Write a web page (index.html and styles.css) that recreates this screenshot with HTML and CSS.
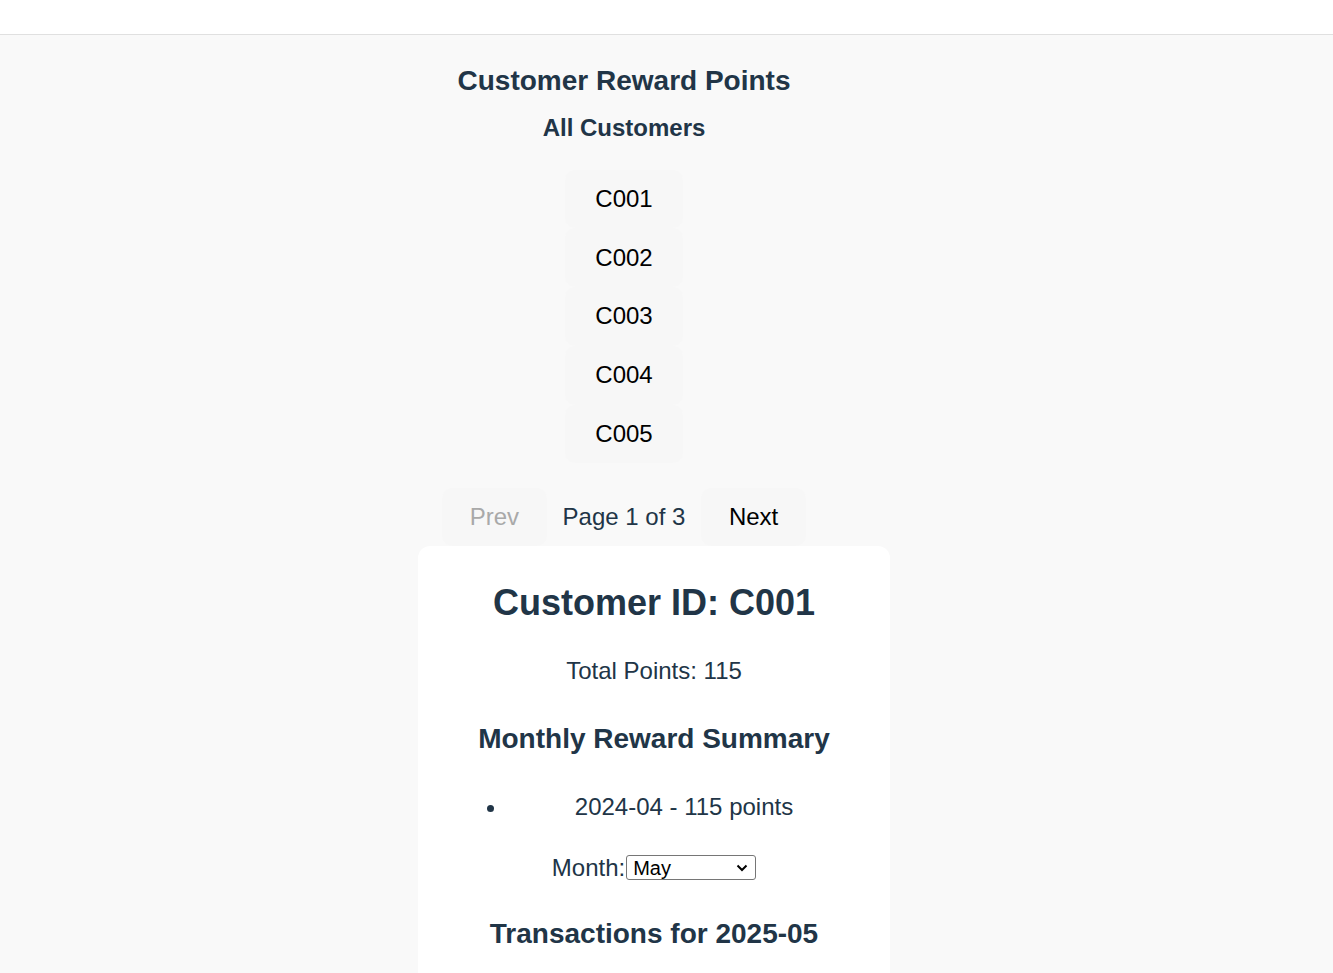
FILE: index.html
```html
<!DOCTYPE html>
<html lang="en">
<head>
<meta charset="utf-8">
<title>Customer Reward Points</title>
<link rel="stylesheet" href="styles.css">
</head>
<body>
<header class="topbar"></header>
<main class="page">
  <div class="column">
    <h1 class="title">Customer Reward Points</h1>
    <h2 class="subtitle">All Customers</h2>
    <div class="customer-list">
      <button class="customer-btn">C001</button>
      <button class="customer-btn">C002</button>
      <button class="customer-btn">C003</button>
      <button class="customer-btn">C004</button>
      <button class="customer-btn">C005</button>
    </div>
    <div class="pager">
      <button class="pager-btn" disabled>Prev</button>
      <span class="pager-label">Page 1 of 3</span>
      <button class="pager-btn">Next</button>
    </div>
    <section class="card">
      <h2 class="card-title">Customer ID: C001</h2>
      <p class="total">Total Points: 115</p>
      <h3 class="section-title">Monthly Reward Summary</h3>
      <ul class="summary">
        <li>2024-04 - 115 points</li>
      </ul>
      <div class="month-row">
        <label class="month-label" for="month">Month:</label>
        <select id="month" class="month-select">
          <option>January</option>
          <option>February</option>
          <option>March</option>
          <option>April</option>
          <option selected>May</option>
          <option>June</option>
        </select>
      </div>
      <h3 class="section-title tx-title">Transactions for 2025-05</h3>
    </section>
  </div>
</main>
</body>
</html>
```

FILE: styles.css
```css
html, body {
  margin: 0;
  padding: 0;
}
body {
  background: #f9f9f9;
  font-family: "Liberation Sans", Arial, sans-serif;
  color: #213547;
}
.topbar {
  height: 34px;
  background: #ffffff;
  border-bottom: 1px solid #e0e0e0;
}
.page {
  display: flex;
  justify-content: center;
  padding-right: 85px;
}
.column {
  width: 412px;
  display: flex;
  flex-direction: column;
  align-items: center;
  text-align: center;
}
.title {
  margin: 30px 0 0;
  font-size: 28px;
  line-height: 32px;
  font-weight: 700;
}
.subtitle {
  margin: 17px 0 0;
  font-size: 24px;
  line-height: 28px;
  font-weight: 700;
}
.customer-list {
  margin-top: 27.6px;
  display: flex;
  flex-direction: column;
  align-items: center;
}
.customer-btn {
  font-family: "Liberation Sans", Arial, sans-serif;
  font-size: 24px;
  line-height: 28px;
  padding: 15.375px 30px;
  background: #f7f7f7;
  color: #000;
  border: none;
  border-radius: 10px;
  cursor: pointer;
}
.pager {
  margin-top: 24.6px;
  display: flex;
  align-items: center;
  gap: 16px;
}
.pager-btn {
  font-family: "Liberation Sans", Arial, sans-serif;
  font-size: 24px;
  line-height: 28px;
  padding: 15px 27.5px;
  background: #f7f7f7;
  color: #000;
  border: none;
  border-radius: 10px;
}
.pager-btn:disabled {
  color: #a9a9a9;
}
.pager-label {
  font-size: 24px;
  line-height: 28px;
}
.card {
  align-self: flex-start;
  width: 100%;
  box-sizing: content-box;
  padding: 20px 30px 40px;
  background: #ffffff;
  border-radius: 12px;
  text-align: center;
}
.card-title {
  margin: 16.5px 0 0;
  font-size: 36px;
  line-height: 41px;
  font-weight: 700;
}
.total {
  margin: 33.5px 0 0;
  font-size: 24px;
  line-height: 28px;
}
.section-title {
  margin: 38px 0 0;
  font-size: 28px;
  line-height: 32px;
  font-weight: 700;
}
.summary {
  margin: 38px 0 0;
  padding-left: 60px;
  font-size: 24px;
  line-height: 28px;
}
.month-row {
  margin-top: 33px;
  display: flex;
  justify-content: center;
  align-items: center;
  height: 28px;
}
.month-label {
  font-size: 24px;
  line-height: 28px;
}
.month-select {
  appearance: none;
  -webkit-appearance: none;
  margin-left: 1px;
  width: 130px;
  height: 25px;
  font-family: "Liberation Sans", Arial, sans-serif;
  font-size: 20px;
  color: #000;
  background-color: #fff;
  background-image: url("data:image/svg+xml;utf8,<svg xmlns='http://www.w3.org/2000/svg' width='12' height='8' viewBox='0 0 12 8'><path d='M1.5 1.5 L6 6 L10.5 1.5' fill='none' stroke='black' stroke-width='2'/></svg>");
  background-repeat: no-repeat;
  background-position: right 7px center;
  border: 1px solid #767676;
  border-radius: 3px;
  padding: 0 24px 0 6px;
}
.tx-title {
  margin-top: 36px;
}
```
